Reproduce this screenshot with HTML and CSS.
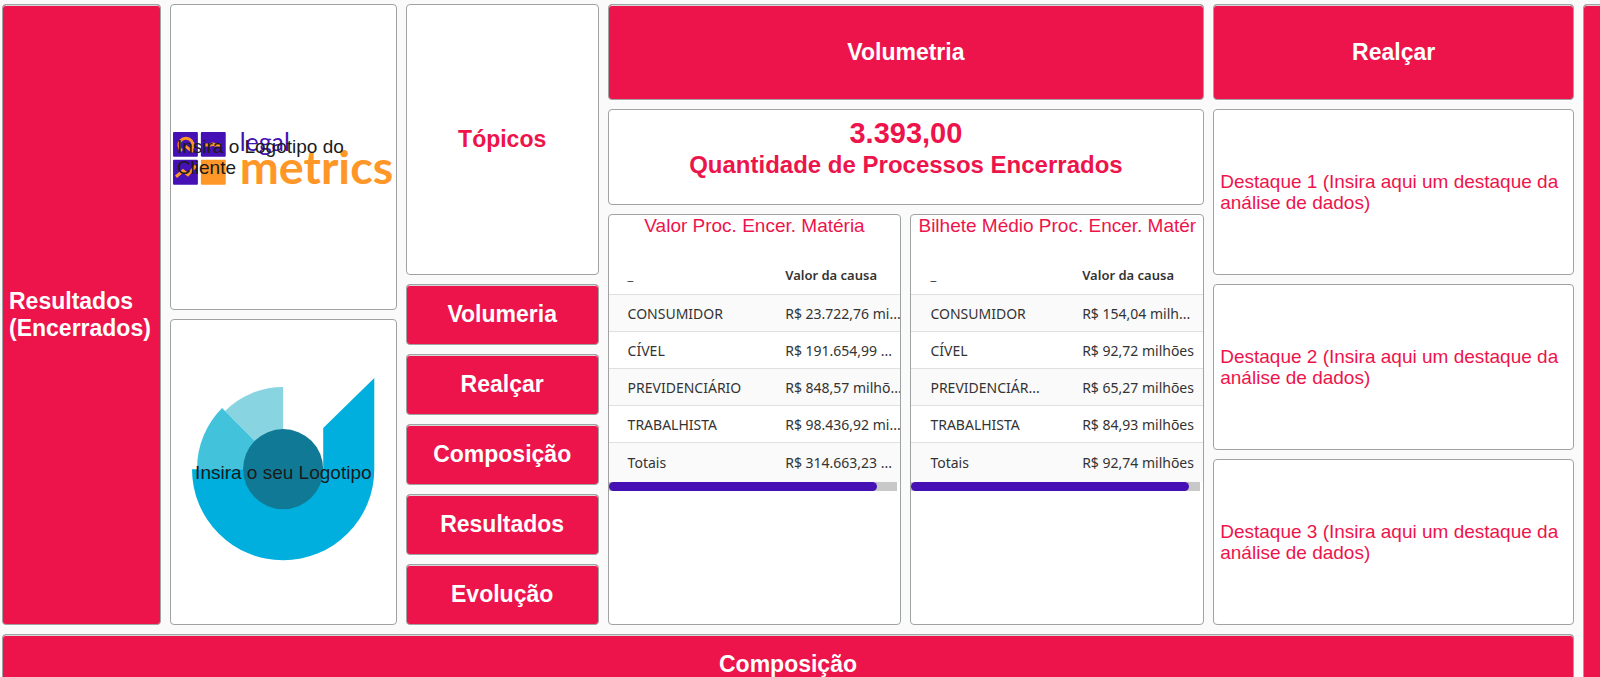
FILE: index.html
```html
<!DOCTYPE html>
<html lang="pt-BR">

<head>
    <meta charset="UTF-8">
    <meta name="viewport" content="width=device-width, initial-scale=1.0">
    <title>Resultados (Encerrados)</title>
    <link rel="stylesheet" href="styles.css">
</head>

<body>
    <main class="board">
        <h1 class="tile pink side">Resultados (Encerrados)</h1>

        <div class="col logos">
            <div class="tile logo">
                <svg class="metrics" viewBox="0 -2 222 55" aria-hidden="true">
                    <g fill="#4611b4">
                        <rect x="0" y="0" width="25" height="25" rx="1" />
                        <rect x="28" y="0" width="25" height="25" rx="1" />
                        <rect x="0" y="28" width="25" height="25" rx="1" />
                    </g>
                    <rect x="28" y="28" width="25" height="25" rx="1" fill="#ff9728" />
                    <g fill="none" stroke="#ff9728" stroke-width="3">
                        <path d="M9 19a7 7 0 1 1 8 0M12 14l8 6" />
                        <path d="M32 13h6l2-1 2 1h6" />
                        <path d="M3 45l7-6 5 4 8-9" />
                    </g>
                    <text class="word-legal" x="67" y="19">legal</text>
                    <text class="word-metrics" x="67" y="52">metrics</text>
                </svg>
                <p>Insira o Logotipo do Cliente</p>
            </div>
            <div class="tile logo">
                <svg class="swirl" viewBox="0 0 183 187" aria-hidden="true">
                    <path d="M91 9A82 82 0 0 0 33 33L91 91Z" fill="#89d4e1" />
                    <path d="M30 30A86 86 0 0 0 5 91H91Z" fill="#42c3db" />
                    <path d="M0 91A91 91 0 0 0 182 91V0L131 50V91Z" fill="#00afdd" />
                    <circle cx="91" cy="91" r="40" fill="#107a96" />
                </svg>
                <p>Insira o seu Logotipo</p>
            </div>
        </div>

        <nav class="col topics">
            <h2 class="tile">Tópicos</h2>
            <a class="tile pink" href="#volumetria">Volumeria</a>
            <a class="tile pink" href="#realcar">Realçar</a>
            <a class="tile pink" href="#composicao">Composição</a>
            <a class="tile pink" href="#resultados">Resultados</a>
            <a class="tile pink" href="#evolucao">Evolução</a>
        </nav>

        <section class="col volume" id="volumetria">
            <h2 class="tile pink">Volumetria</h2>
            <div class="tile total">
                <strong>3.393,00</strong>
                <span>Quantidade de Processos Encerrados</span>
            </div>
            <div class="tables">
                <div class="tile panel">
                    <h3>Valor Proc. Encer. Matéria</h3>
                    <table>
                        <thead>
                            <tr><th>_</th><th>Valor da causa</th></tr>
                        </thead>
                        <tbody>
                            <tr><td>CONSUMIDOR</td><td>R$ 23.722,76 mi...</td></tr>
                            <tr><td>CÍVEL</td><td>R$ 191.654,99 ...</td></tr>
                            <tr><td>PREVIDENCIÁRIO</td><td>R$ 848,57 milhõ...</td></tr>
                            <tr><td>TRABALHISTA</td><td>R$ 98.436,92 mi...</td></tr>
                            <tr><td>Totais</td><td>R$ 314.663,23 ...</td></tr>
                        </tbody>
                    </table>
                    <div class="scroll"><div class="thumb" style="width: 93%"></div></div>
                </div>
                <div class="tile panel">
                    <h3>Bilhete Médio Proc. Encer. Matér</h3>
                    <table>
                        <thead>
                            <tr><th>_</th><th>Valor da causa</th></tr>
                        </thead>
                        <tbody>
                            <tr><td>CONSUMIDOR</td><td>R$ 154,04 milh...</td></tr>
                            <tr><td>CÍVEL</td><td>R$ 92,72 milhões</td></tr>
                            <tr><td>PREVIDENCIÁR...</td><td>R$ 65,27 milhões</td></tr>
                            <tr><td>TRABALHISTA</td><td>R$ 84,93 milhões</td></tr>
                            <tr><td>Totais</td><td>R$ 92,74 milhões</td></tr>
                        </tbody>
                    </table>
                    <div class="scroll"><div class="thumb" style="width: 96%"></div></div>
                </div>
            </div>
        </section>

        <section class="col highlights" id="realcar">
            <h2 class="tile pink">Realçar</h2>
            <p class="tile">Destaque 1 (Insira aqui um destaque da análise de dados)</p>
            <p class="tile">Destaque 2 (Insira aqui um destaque da análise de dados)</p>
            <p class="tile">Destaque 3 (Insira aqui um destaque da análise de dados)</p>
        </section>

        <div class="tile pink edge"></div>

        <h2 class="tile pink bottom" id="composicao">Composição</h2>
    </main>
</body>

</html>
```

FILE: styles.css
```css
* {
    margin: 0;
    padding: 0;
    box-sizing: border-box;
}

body {
    background-color: #fafafa;
    font-family: "Liberation Sans", Arial, sans-serif;
    font-size: 19px;
    line-height: 21px;
    color: #1a1a1a;
}

.board {
    display: grid;
    grid-template-columns: 159fr 227fr 193fr 597fr 361fr 17px;
    grid-template-rows: minmax(calc(100vh - 56px), auto) 60px;
    gap: 9px;
    height: 100vh;
    padding: 4px 0 0 2px;
    overflow: hidden auto;
    scrollbar-width: none;
}

.col {
    display: grid;
    gap: 9px;
    min-width: 0;
}

.tile {
    display: flex;
    align-items: center;
    justify-content: center;
    min-width: 0;
    background-color: #fff;
    border: 1px solid #a0a3a3;
    border-radius: 4px;
}

.pink {
    background-color: #ed144b;
    box-shadow: inset 0 1px 0 #d6dcda;
    color: #fff;
}

h1,
h2,
.topics a {
    font-size: 23px;
    line-height: 27px;
    font-weight: bold;
    text-decoration: none;
}

.side {
    justify-content: flex-start;
    padding-left: 6px;
}

/* logotipos */
.logos {
    grid-template-rows: 1fr 1fr;
}

.logo {
    display: grid;
    grid-template-columns: 1fr;
    justify-items: center;
    padding: 0 2px;
}

/* o texto fica por cima do desenho */
.logo svg,
.logo p {
    grid-area: 1 / 1;
}

.logo p {
    padding: 0 4px;
}

.metrics {
    width: 100%;
    overflow: visible;
}

.word-legal {
    font-family: Lato, sans-serif;
    font-size: 25px;
    fill: #4611b4;
}

.word-metrics {
    font-family: Lato, sans-serif;
    font-size: 47px;
    font-weight: bold;
    fill: #ff9728;
}

.swirl {
    width: 83%;
}

/* menu de tópicos */
.topics {
    grid-template-rows: 1fr repeat(5, 61px);
}

.topics h2 {
    color: #ed144b;
}

/* volumetria */
.volume {
    grid-template-rows: 96px 96px 1fr;
}

.total {
    flex-direction: column;
    justify-content: flex-start;
    padding-top: 8px;
    color: #ed144b;
    font-size: 24px;
    font-weight: bold;
    line-height: 31px;
}

.total strong {
    font-size: 29px;
}

.tables {
    display: grid;
    grid-template-columns: 1fr 1fr;
    gap: 9px;
}

.panel {
    display: block;
    overflow: hidden;
}

.panel h3 {
    font-size: 19px;
    font-weight: normal;
    text-align: center;
    white-space: nowrap;
    color: #ed144b;
}

table {
    width: 100%;
    margin-top: 21px;
    table-layout: fixed;
    border-collapse: collapse;
    font-family: "Noto Sans", sans-serif;
    font-size: 14px;
    line-height: 20px;
    color: #333;
}

th,
td {
    height: 37px;
    padding-left: 19px;
    text-align: left;
    white-space: nowrap;
    overflow: hidden;
}

td {
    padding-top: 2px;
}

th {
    font-size: 13px;
    font-weight: 600;
}

th:first-child {
    width: 54%;
    font-weight: normal;
}

.panel + .panel th:first-child {
    width: 52%;
}

tbody tr {
    border-top: 1px solid #e0e0e0;
}

tbody tr:nth-child(odd) {
    background-color: #fafafa;
}

/* linha de totais */
tbody tr:last-child td {
    height: 40px;
}

.scroll {
    height: 9px;
    margin-right: 3px;
    background-color: #c8c8c8;
}

.thumb {
    height: 9px;
    border-radius: 5px;
    background-color: #4611b4;
}

/* destaques */
.highlights {
    grid-template-rows: 96px 1fr 1fr 1fr;
}

.highlights p {
    justify-content: flex-start;
    padding: 0 6px;
    color: #ed144b;
}

.edge {
    grid-area: 1 / 6 / 3 / 7;
    margin-right: -8px;
}

.bottom {
    grid-area: 2 / 1 / 3 / 6;
}
```
